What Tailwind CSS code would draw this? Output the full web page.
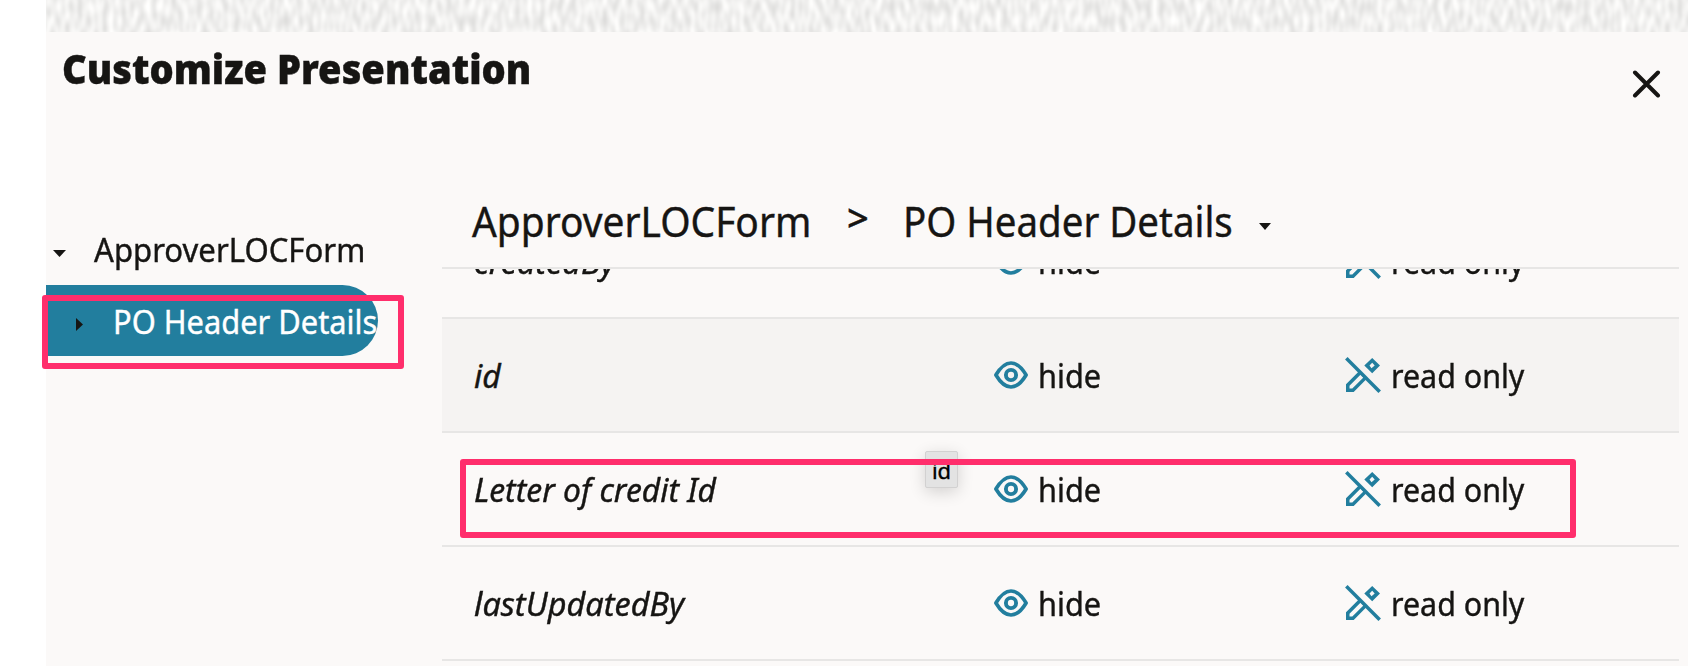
<!DOCTYPE html>
<html lang="en">
<head>
<meta charset="utf-8">
<title>Customize Presentation</title>
<script src="https://cdn.jsdelivr.net/npm/@tailwindcss/browser@4"></script>
</head>
<body class="relative flex h-[666px] w-[1688px] flex-col overflow-hidden bg-white pl-[46px] font-['Noto_Sans',sans-serif] text-[32px] leading-none text-[#161513] [-webkit-text-stroke:0.4px]">
<svg class="absolute h-0 w-0" aria-hidden="true">
  <symbol id="eye" viewBox="0 0 34 28"><path d="M1.9 14C6.8 5.8 11.3 2 17 2s10.200 3.800 15.100 12C27.200 22.200 22.700 26 17 26S6.800 22.200 1.900 14Z" fill="none" stroke="currentColor" stroke-width="3.700" stroke-linejoin="round"/><circle cx="17" cy="14" r="5.100" fill="none" stroke="currentColor" stroke-width="3.900"/></symbol>
  <symbol id="noedit" viewBox="0 0 36 36"><path d="M1.300 1.300 34.700 34.700" stroke="currentColor" stroke-width="3.500" fill="none"/><path fill="currentColor" fill-rule="evenodd" d="M27.200 1 35 8.500 27.200 16.300 19.300 8.500ZM27.200 5.800 24.500 8.500 26.500 11.200 29.700 8.500Z"/><path fill="currentColor" fill-rule="evenodd" d="M1 35V27.300L14.500 13.800 22.300 21.300 8.700 35ZM4.500 31.500H7.300L18.400 20.400 15.700 17.600 4.500 28.700Z"/></symbol>
</svg>
<div class="h-8 shrink-0 bg-[#f3f2f0]">
  <svg class="block h-8 w-full">
    <filter id="weave" x="0" y="0" width="100%" height="100%" color-interpolation-filters="sRGB"><feTurbulence type="fractalNoise" baseFrequency="0.16 0.07" numOctaves="1" seed="7"/><feColorMatrix values="0.22 0 0 0 0.832  0.22 0 0 0 0.830  0.22 0 0 0 0.825  0 0 0 0 1"/></filter>
    <rect width="100%" height="32" filter="url(#weave)"/>
  </svg>
</div>
<main class="flex min-h-0 flex-1 flex-col bg-[#fbf9f8]">
  <header class="flex h-[142px] shrink-0 items-start justify-between pt-4 pr-[27px] pl-4">
    <h1 class="origin-left scale-x-[0.929] text-[41px] leading-[41px] font-black whitespace-nowrap">Customize Presentation</h1>
    <button class="mt-[21px]" aria-label="Close"><svg class="block h-[29px] w-[29px]" viewBox="0 0 29 29"><path d="M3 3.500 26 26.500M26 3.500 3 26.500" stroke="currentColor" stroke-width="4" stroke-linecap="round"/></svg></button>
  </header>
  <div class="flex min-h-0 flex-1">
    <nav class="w-[396px] shrink-0 pt-[41px]">
      <div class="flex h-[70px] items-center">
        <svg class="mt-1.5 ml-[7px] h-[7px] w-[13px] shrink-0" viewBox="0 0 13 7"><path d="M0 0H13L6.500 7Z" fill="currentColor"/></svg>
        <span class="ml-7 origin-left scale-x-[0.972]">ApproverLOCForm</span>
      </div>
      <div class="flex h-[71px] w-[332px] items-center rounded-r-full bg-[#227e9e]">
        <svg class="mt-[7px] ml-[30px] h-[13px] w-[7px] shrink-0" viewBox="0 0 7 13"><path d="M0 0V13L7 6.500Z" fill="currentColor"/></svg>
        <span class="ml-[30px] origin-left translate-y-px scale-x-[0.963] whitespace-nowrap text-white">PO Header Details</span>
      </div>
    </nav>
    <section class="flex w-[1237px] shrink-0 flex-col">
      <div class="flex h-[95px] shrink-0 items-center border-b-2 border-[#e7e6e5] pl-[30px] text-[41px]">
        <span class="w-[375px] origin-left translate-y-px scale-x-[0.949]">ApproverLOCForm</span>
        <span class="w-[56px] -translate-y-1 text-[38px] font-medium">&gt;</span>
        <span class="w-[356px] origin-left translate-y-px scale-x-[0.938] whitespace-nowrap">PO Header Details</span>
        <svg class="mt-3 h-[7px] w-[12px]" viewBox="0 0 12 7"><path d="M0 0H12L6 7Z" fill="currentColor"/></svg>
      </div>
      <div class="min-h-0 flex-1 overflow-hidden">
        <div class="-mt-16">
          <div class="flex h-[114px] items-center border-b-2 border-[#e7e6e5] pt-0.5 pl-8">
            <em class="w-[520px] origin-left scale-x-[1.01]">createdBy</em>
            <svg class="-mt-0.5 h-7 w-[34px] text-[#227e9e]"><use href="#eye"/></svg><span class="ml-2.5 w-[307px] origin-left scale-x-[0.96]">hide</span>
            <svg class="-mt-0.5 h-9 w-9 text-[#227e9e]"><use href="#noedit"/></svg><span class="ml-2.5 origin-left scale-x-[0.95]">read only</span>
          </div>
          <div class="flex h-[114px] items-center border-b-2 border-[#e7e6e5] bg-[#f5f3f2] pt-0.5 pl-8">
            <em class="w-[520px]">id</em>
            <svg class="-mt-0.5 h-7 w-[34px] text-[#227e9e]"><use href="#eye"/></svg><span class="ml-2.5 w-[307px] origin-left scale-x-[0.96]">hide</span>
            <svg class="-mt-0.5 h-9 w-9 text-[#227e9e]"><use href="#noedit"/></svg><span class="ml-2.5 origin-left scale-x-[0.95]">read only</span>
          </div>
          <div class="flex h-[114px] items-center border-b-2 border-[#e7e6e5] pt-0.5 pl-8">
            <em class="w-[520px] origin-left scale-x-[0.995]">Letter of credit Id</em>
            <svg class="-mt-0.5 h-7 w-[34px] text-[#227e9e]"><use href="#eye"/></svg><span class="ml-2.5 w-[307px] origin-left scale-x-[0.96]">hide</span>
            <svg class="-mt-0.5 h-9 w-9 text-[#227e9e]"><use href="#noedit"/></svg><span class="ml-2.5 origin-left scale-x-[0.95]">read only</span>
          </div>
          <div class="flex h-[114px] items-center border-b-2 border-[#e7e6e5] pt-0.5 pl-8">
            <em class="w-[520px] origin-left scale-x-[1.015]">lastUpdatedBy</em>
            <svg class="-mt-0.5 h-7 w-[34px] text-[#227e9e]"><use href="#eye"/></svg><span class="ml-2.5 w-[307px] origin-left scale-x-[0.96]">hide</span>
            <svg class="-mt-0.5 h-9 w-9 text-[#227e9e]"><use href="#noedit"/></svg><span class="ml-2.5 origin-left scale-x-[0.95]">read only</span>
          </div>
        </div>
      </div>
    </section>
  </div>
</main>
<div class="absolute top-[451px] left-[925px] flex h-[37px] w-[33px] items-center justify-center rounded-[2px] border border-[#d2d1d1] bg-[#e3e3e3] text-[22px] text-black shadow-[0_4px_16px_rgba(0,0,0,0.16)]">id</div>
<div class="absolute top-[295px] left-[42px] h-[74px] w-[362px] rounded-[3px] border-6 border-[#ff2e6c]"></div>
<div class="absolute top-[458.500px] left-[460px] h-[79.500px] w-[1115.500px] rounded-[3px] border-6 border-[#ff2e6c]"></div>
</body>
</html>
